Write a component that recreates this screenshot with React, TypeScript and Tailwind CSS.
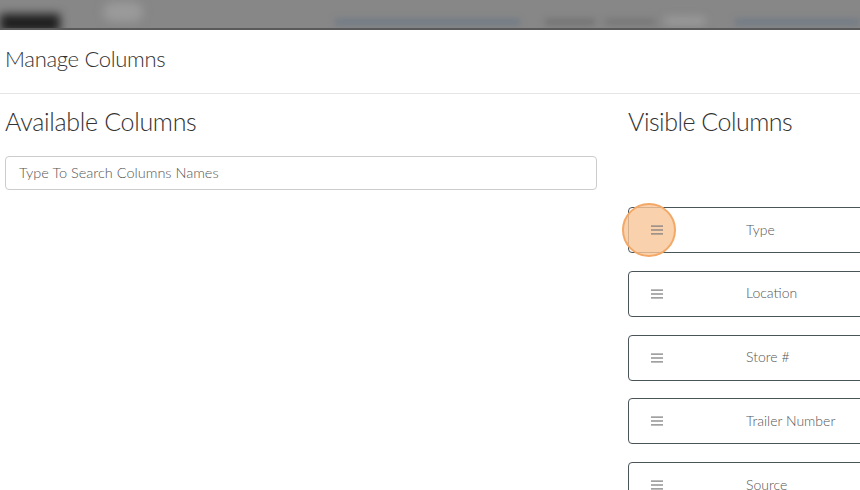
import React from "react";

const Hamburger = () => (
  <svg width="12" height="10" viewBox="0 0 12 10" className="shrink-0">
    <rect x="0" y="0.5" width="12" height="1.2" fill="#7a7a7a" />
    <rect x="0" y="4.4" width="12" height="1.2" fill="#7a7a7a" />
    <rect x="0" y="8.3" width="12" height="1.2" fill="#7a7a7a" />
  </svg>
);

const rows = ["Type", "Location", "Store #", "Trailer Number", "Source"];

export default function App() {
  return (
    <div
      className="w-[860px] h-[490px] overflow-hidden bg-white"
      style={{ fontFamily: "Lato, 'Noto Sans', sans-serif" }}
    >
      {/* blurred backdrop bar */}
      <div className="h-[30px] bg-[#878787] border-b-2 border-[#5a5a5a] flex items-end overflow-hidden">
        <div className="w-[60px] h-[18px] bg-[#1e1e1e] blur-[5px] mb-[-4px]" />
        <div className="w-[40px] h-[20px] ml-[43px] mb-[6px] bg-[#9a9a9a] blur-[5px] rounded-full" />
        <div className="w-[185px] h-[6px] ml-[192px] mb-[3px] bg-[#6f7a86] blur-[3px]" />
        <div className="w-[50px] h-[6px] ml-[25px] mb-[3px] bg-[#727272] blur-[3px]" />
        <div className="w-[50px] h-[6px] ml-[10px] mb-[3px] bg-[#767676] blur-[3px]" />
        <div className="w-[40px] h-[8px] ml-[10px] mb-[3px] bg-[#9c9c9c] blur-[4px]" />
        <div className="w-[125px] h-[6px] ml-[30px] mb-[3px] bg-[#6f7a86] blur-[3px]" />
      </div>

      {/* modal header */}
      <div className="h-[64px] flex items-center pl-[5px] border-b border-[#e5e5e5]">
        <span className="text-[22px] font-light text-[#333] tracking-[-0.3px] leading-none mb-[5px]">
          Manage Columns
        </span>
      </div>

      {/* body */}
      <div className="flex pl-[5px] pt-[14px]">
        <div className="w-[592px] shrink-0">
          <div className="text-[25px] font-light text-[#333] leading-none h-[30px] tracking-[-0.3px] pt-[1px]">
            Available Columns
          </div>
          <div className="mt-[18px] h-[34px] border border-[#cccccc] rounded-[4px] flex items-center pl-[13px]">
            <span className="text-[14.5px] text-[#555] font-light">
              Type To Search Columns Names
            </span>
          </div>
        </div>

        <div className="ml-[31px] flex-1">
          <div className="text-[25px] font-light text-[#333] leading-none h-[30px] tracking-[-0.5px] pt-[1px]">
            Visible Columns
          </div>
          <div className="mt-[69px] flex flex-col gap-[17.75px]">
            {rows.map((r, i) => (
              <div
                key={r}
                className="relative h-[46px] w-[260px] border border-[#4a5559] rounded-[4px] flex items-center"
              >
                {i === 0 && (
                  <div className="absolute left-[-7px] top-[-5px] w-[54px] h-[54px] rounded-full bg-[#f9c699]/80 border-2 border-[#f3a866]" />
                )}
                <div className="relative w-[117px] pl-[22px] flex items-center">
                  <Hamburger />
                </div>
                <span className="text-[14px] text-[#555] font-light mb-[2px]">{r}</span>
              </div>
            ))}
          </div>
        </div>
      </div>
    </div>
  );
}
